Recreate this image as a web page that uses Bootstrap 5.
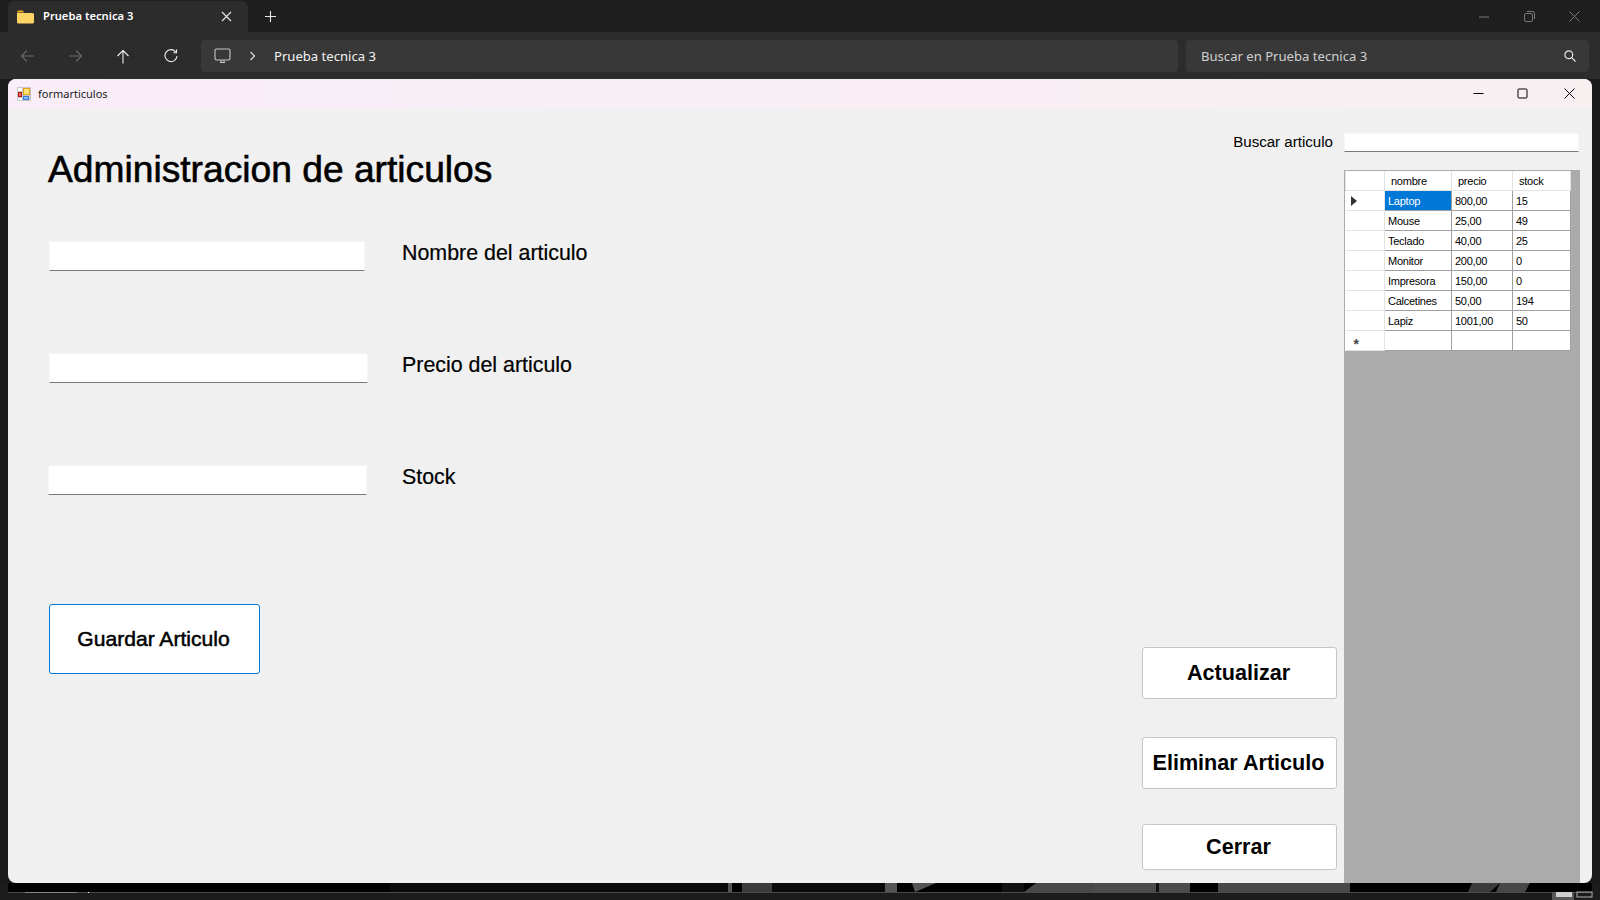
<!DOCTYPE html>
<html lang="es">

<head>
    <meta charset="UTF-8">
    <meta name="viewport" content="width=device-width, initial-scale=1.0">
    <title>Prueba tecnica 3</title>
    <link rel="stylesheet" href="https://cdn.jsdelivr.net/npm/bootstrap@5.3.0/dist/css/bootstrap.min.css">
    <style>
        body {
            width: 1600px;
            height: 900px;
            overflow: hidden;
            background-color: #1c1c1c;
            font-family: "Liberation Sans", Arial, sans-serif;
        }

        /* explorer chrome */
        .tab-strip {
            height: 32px;
            background-color: #1f1f1f;
            padding: 1px 0 0 8px;
            font-family: "Noto Sans", sans-serif;
        }

        .folder-tab {
            width: 240px;
            height: 31px;
            background-color: #2c2c2c;
            border-radius: 6px 6px 0 0;
            padding: 0 16px 0 9px;
            color: #fff;
            font-size: 11.2px;
            font-weight: 600;
        }

        .folder-icon {
            margin-right: 9px;
        }

        .new-tab {
            margin-left: 16px;
        }

        .win-buttons {
            gap: 34px;
            padding-right: 20px;
        }

        .tool-strip {
            height: 47px;
            background-color: #2c2c2c;
            padding: 8px 11px 7px 0;
            font-family: "Noto Sans", sans-serif;
            font-size: 13.1px;
            color: #f2f2f2;
        }

        .tool-text {
            padding-top: 2px;
        }

        .nav-icons {
            width: 201px;
            padding-left: 20px;
            gap: 33px;
        }

        .refresh-icon {
            margin-left: 1px;
        }

        .path-box {
            width: 977px;
            height: 32px;
            background-color: #383838;
            border-radius: 4px;
            padding: 0 13px;
        }

        .path-chevron {
            margin: 0 18px;
        }

        .search-box {
            width: 403px;
            height: 32px;
            margin-left: 8px;
            background-color: #383838;
            border-radius: 4px;
            padding: 0 13px 0 15px;
            color: #cfcfcf;
        }

        /* the form window */
        .desk-area {
            height: 804px;
            padding: 0 8px;
            background-color: #1a1a1a;
        }

        .form-window {
            width: 1584px;
            height: 804px;
            background-color: #f0f0f0;
            border-radius: 8px;
            overflow: hidden;
        }

        .form-title {
            height: 30px;
            padding: 0 17px 0 9px;
            background: linear-gradient(to right, #f8edf8, #f8eff1);
            font-family: "Noto Sans", sans-serif;
            font-size: 11px;
            color: #1a1a1a;
        }

        .form-title-text {
            margin-left: 7px;
        }

        .form-buttons {
            gap: 34px;
            padding-bottom: 2px;
        }

        .form-max {
            margin: 0 2px 0 -1px;
        }

        .form-body {
            height: 774px;
        }

        .left-pane {
            width: 1134px;
            padding-left: 40px;
        }

        .page-heading {
            margin: 40px 0 52px;
            font-size: 37.2px;
            line-height: 40px;
            font-weight: 400;
            font-family: inherit;
            color: #000;
            -webkit-text-stroke: 0.6px #000;
        }

        .field-row {
            height: 30px;
            margin-bottom: 82px;
        }

        .input-slot {
            width: 354px;
        }

        .win-input {
            height: 30px;
            padding: 0 4px;
            border: 1px solid #f6f6f6;
            border-bottom: 1px solid #7a7a7a;
            border-radius: 0;
            background-color: #fff;
        }

        .win-input-name {
            width: 316px;
            margin-left: 1px;
        }

        .win-input-price {
            width: 319px;
            margin-left: 1px;
        }

        .win-input-stock {
            width: 319px;
        }

        .field-label {
            font-size: 21.4px;
            line-height: 24px;
            color: #000;
            -webkit-text-stroke: 0.2px #000;
        }

        .win-btn {
            background-color: #fff;
            color: #000;
            font-family: inherit;
            font-size: 21.6px;
            font-weight: 700;
            border: 1px solid #c6c6c6;
            border-radius: 3px;
            padding: 0 2px 0 0;
        }

        .btn-save {
            width: 211px;
            height: 70px;
            margin: 27px 0 0 1px;
            padding: 0 2px 1px 0;
            border: 1.5px solid #0078d7;
            font-size: 21.1px;
            font-weight: 400;
            -webkit-text-stroke: 0.5px #000;
        }

        .mid-pane {
            width: 195px;
        }

        .search-label {
            margin-top: 23px;
            padding-right: 4px;
            font-size: 15.1px;
            line-height: 20px;
            color: #000;
        }

        .mid-buttons {
            padding-bottom: 13px;
        }

        .btn-update {
            height: 52px;
            margin-bottom: 38px;
        }

        .btn-delete {
            height: 52px;
            margin-bottom: 35px;
        }

        .btn-close-form {
            height: 46px;
        }

        .right-pane {
            margin-left: 7px;
            width: 248px;
        }

        .search-input {
            width: 235px;
            height: 19px;
            margin: 24px 0 18px 0;
        }

        .data-grid {
            width: 236px;
            height: 713px;
            background-color: #ababab;
            padding: 1px 0 0 1px;
        }

        .grid-table {
            width: 225px;
            table-layout: fixed;
            border-collapse: collapse;
            background-color: #fff;
            font-size: 11px;
            letter-spacing: -0.25px;
            color: #000;
        }

        .grid-table td,
        .grid-table th {
            height: 20px;
            padding: 1px 0 0 3px;
            font-weight: 400;
            border: 1px solid #a0a0a0;
            line-height: 12px;
            white-space: nowrap;
        }

        .grid-table thead th {
            height: 19px;
            padding-left: 6px;
            border-color: #e3e3e3;
            border-top: 0;
        }

        .grid-table .row-head {
            padding: 0 0 0 6px;
            border-color: #e3e3e3;
            border-left: 0;
        }

        .grid-table .cell-on {
            background-color: #0078d7;
            color: #fff;
        }

        .row-arrow {
            display: block;
            width: 0;
            height: 0;
            margin: 1px 0 0 -1px;
            border-top: 5px solid transparent;
            border-bottom: 5px solid transparent;
            border-left: 6px solid #333;
        }

        .row-star {
            display: block;
            margin: 7px 0 0 2px;
            font-size: 14px;
            font-weight: 700;
            color: #444;
        }

        .desk-strip {
            display: block;
        }
    </style>
</head>

<body>

    <!-- Explorer tab strip -->
    <div class="tab-strip d-flex align-items-center">
        <div class="folder-tab d-flex align-items-center">
            <svg class="folder-icon" width="17" height="14" viewBox="0 0 17 14">
                <path d="M0 2a1.5 1.5 0 0 1 1.5-1.5h4L7.5 2.500H0z" fill="#f0a91e" />
                <path d="M0 3h15.500A1.500 1.500 0 0 1 17 4.500V12a1.500 1.500 0 0 1-1.500 1.500h-14A1.500 1.500 0 0 1 0 12z" fill="#fdd466" />
            </svg>
            <span class="flex-grow-1">Prueba tecnica 3</span>
            <svg width="11" height="11" viewBox="0 0 11 11">
                <path d="M1 1l9 9M10 1l-9 9" stroke="#e8e8e8" stroke-width="1.1" />
            </svg>
        </div>
        <svg class="new-tab flex-grow-0" width="13" height="13" viewBox="0 0 13 13">
            <path d="M6.500 1v11M1 6.500h11" stroke="#e8e8e8" stroke-width="1.100" />
        </svg>
        <div class="win-buttons d-flex align-items-center ms-auto">
            <svg width="12" height="10" viewBox="0 0 12 10">
                <path d="M1 5h10" stroke="#777" />
            </svg>
            <svg width="11" height="11" viewBox="0 0 11 11" fill="none" stroke="#777">
                <rect x="0.500" y="2.500" width="8" height="8" rx="1.500" />
                <path d="M3 .5h5.500a2 2 0 0 1 2 2V8" />
            </svg>
            <svg width="11" height="11" viewBox="0 0 11 11">
                <path d="M.5.5l10 10M10.500.5l-10 10" stroke="#777" />
            </svg>
        </div>
    </div>

    <!-- Explorer toolbar -->
    <div class="tool-strip d-flex align-items-center">
        <div class="nav-icons d-flex align-items-center">
            <svg width="15" height="14" viewBox="0 0 15 14" fill="none" stroke="#6a6a6a" stroke-width="1.100">
                <path d="M14 7H1.500M7 1.500L1.500 7 7 12.500" />
            </svg>
            <svg width="15" height="14" viewBox="0 0 15 14" fill="none" stroke="#6a6a6a" stroke-width="1.100">
                <path d="M1 7h12.500M8 1.500L13.500 7 8 12.500" />
            </svg>
            <svg width="14" height="15" viewBox="0 0 14 15" fill="none" stroke="#efefef" stroke-width="1.100">
                <path d="M7 14.500V1.500M1.500 7L7 1.500 12.500 7" />
            </svg>
            <svg class="refresh-icon" width="14" height="14" viewBox="0 0 14 14" fill="none" stroke="#efefef" stroke-width="1.100">
                <path d="M11.700 2.900A6 6 0 1 0 13 7" />
                <path d="M12.500.5v3.200H9.300" />
            </svg>
        </div>
        <div class="path-box d-flex align-items-center">
            <svg width="17" height="16" viewBox="0 0 17 16" fill="none" stroke="#c8c8c8" stroke-width="1.100">
                <rect x="1" y="1" width="15" height="11" rx="1.500" />
                <path d="M6 14.500h5M7 12v2.500M10 12v2.500" />
            </svg>
            <svg class="path-chevron" width="7" height="10" viewBox="0 0 7 10" fill="none" stroke="#dcdcdc" stroke-width="1.200">
                <path d="M1.500 1l4 4-4 4" />
            </svg>
            <span class="tool-text">Prueba tecnica 3</span>
        </div>
        <div class="search-box d-flex align-items-center justify-content-between">
            <span class="tool-text">Buscar en Prueba tecnica 3</span>
            <svg width="12" height="12" viewBox="0 0 12 12" fill="none" stroke="#e6e6e6" stroke-width="1.200">
                <circle cx="4.800" cy="4.800" r="3.900" />
                <path d="M7.700 7.700l3.800 3.800" />
            </svg>
        </div>
    </div>

    <!-- Form window -->
    <div class="desk-area">
        <div class="form-window d-flex flex-column">
            <div class="form-title d-flex align-items-center">
                <svg width="14" height="14" viewBox="0 0 14 14">
                    <rect width="14" height="14" fill="#c8c8c8" />
                    <rect x="1" y="1" width="4" height="3" fill="#fff" />
                    <rect x="1" y="11" width="1.500" height="2" fill="#fff" />
                    <rect x="3" y="11" width="2" height="2" fill="#fff" />
                    <rect x="1" y="5" width="4" height="5" fill="#b01818" />
                    <rect x="2" y="6" width="2" height="3" fill="#ef6a5a" />
                    <rect x="6" y="1" width="7" height="7" fill="#e2a51e" />
                    <rect x="7" y="2" width="5" height="5" fill="#ffe27a" />
                    <rect x="6" y="9" width="6" height="4" fill="#3a78d8" />
                    <rect x="7" y="10" width="4" height="2" fill="#8cb8f0" />
                </svg>
                <span class="form-title-text flex-grow-1">formarticulos</span>
                <div class="form-buttons d-flex align-items-center">
                    <svg width="11" height="11" viewBox="0 0 11 11">
                        <path d="M.5 5.500h10" stroke="#000" />
                    </svg>
                    <svg class="form-max" width="11" height="11" viewBox="0 0 11 11" fill="none">
                        <rect x="1" y="1" width="9" height="9" rx="1" stroke="#000" />
                    </svg>
                    <svg width="11" height="11" viewBox="0 0 11 11">
                        <path d="M.5.5l10 10M10.500.5l-10 10" stroke="#000" />
                    </svg>
                </div>
            </div>

            <div class="form-body d-flex">
                <!-- Article form -->
                <div class="left-pane">
                    <h1 class="page-heading">Administracion de articulos</h1>
                    <div class="field-row d-flex">
                        <div class="input-slot"><input class="form-control win-input win-input-name" type="text"></div>
                        <div class="field-label">Nombre del articulo</div>
                    </div>
                    <div class="field-row d-flex">
                        <div class="input-slot"><input class="form-control win-input win-input-price" type="text"></div>
                        <div class="field-label">Precio del articulo</div>
                    </div>
                    <div class="field-row d-flex">
                        <div class="input-slot"><input class="form-control win-input win-input-stock" type="text"></div>
                        <div class="field-label">Stock</div>
                    </div>
                    <button class="btn win-btn btn-save" type="button">Guardar Articulo</button>
                </div>

                <!-- Search label and action buttons -->
                <div class="mid-pane d-flex flex-column">
                    <div class="search-label text-end">Buscar articulo</div>
                    <div class="mid-buttons d-flex flex-column mt-auto">
                        <button class="btn win-btn btn-update" type="button">Actualizar</button>
                        <button class="btn win-btn btn-delete" type="button">Eliminar Articulo</button>
                        <button class="btn win-btn btn-close-form" type="button">Cerrar</button>
                    </div>
                </div>

                <!-- Search box and article grid -->
                <div class="right-pane">
                    <input class="form-control win-input search-input" type="text">
                    <div class="data-grid">
                        <table class="grid-table">
                            <colgroup>
                                <col style="width: 39px">
                                <col style="width: 67px">
                                <col style="width: 61px">
                                <col style="width: 58px">
                            </colgroup>
                            <thead>
                                <tr>
                                    <th></th>
                                    <th>nombre</th>
                                    <th>precio</th>
                                    <th>stock</th>
                                </tr>
                            </thead>
                            <tbody id="gridRows"></tbody>
                        </table>
                    </div>
                </div>
            </div>
        </div>
    </div>

    <!-- Strip of wallpaper under the window -->
    <svg class="desk-strip" width="1600" height="17" viewBox="0 0 1600 17">
        <rect width="1600" height="17" fill="#1c1c1c" />
        <rect x="8" width="1584" height="9" fill="#000" />
        <rect x="390" width="338" height="9" fill="#0b0b0b" />
        <rect x="728" width="4" height="9" fill="#555" />
        <rect x="742" width="30" height="9" fill="#3c3c3c" />
        <rect x="772" width="113" height="9" fill="#0a0a0a" />
        <rect x="885" width="12" height="9" fill="#555" />
        <polygon points="912,0 936,0 915,9" fill="#555" />
        <rect x="1002" width="22" height="9" fill="#111" />
        <polygon points="1036,0 1094,0 1094,9 1024,9" fill="#484848" />
        <rect x="1094" width="62" height="9" fill="#4c4c4c" />
        <rect x="1156" width="3" height="9" fill="#111" />
        <rect x="1159" width="31" height="9" fill="#4c4c4c" />
        <rect x="1218" width="132" height="9" fill="#484848" />
        <polygon points="1472,0 1500,0 1490,9 1468,9" fill="#3c3c3c" />
        <polygon points="1500,0 1530,0 1525,9 1496,9" fill="#484848" />
        <rect x="8" y="9" width="1584" height="1" fill="#4a4a4a" />
        <rect x="25" y="9" width="52" height="1" fill="#7c868e" />
        <rect x="88" y="9" width="1" height="1" fill="#fff" />
        <rect x="1552" y="9" width="22" height="8" fill="#585858" />
        <rect x="1556" y="9" width="16" height="5" fill="#d0d0d0" />
        <rect x="1577" y="9" width="15" height="5" fill="none" stroke="#b0b0b0" />
    </svg>

    <script>
        const articulos = [
            ["Laptop", "800,00", "15"],
            ["Mouse", "25,00", "49"],
            ["Teclado", "40,00", "25"],
            ["Monitor", "200,00", "0"],
            ["Impresora", "150,00", "0"],
            ["Calcetines", "50,00", "194"],
            ["Lapiz", "1001,00", "50"]
        ];

        let rows = "";
        articulos.forEach((a, i) => {
            rows += `<tr>
                <td class="row-head">${i === 0 ? '<span class="row-arrow"></span>' : ""}</td>
                <td class="${i === 0 ? "cell-on" : ""}">${a[0]}</td>
                <td>${a[1]}</td>
                <td>${a[2]}</td>
            </tr>`;
        });
        rows += `<tr><td class="row-head"><span class="row-star">*</span></td><td></td><td></td><td></td></tr>`;
        document.getElementById("gridRows").innerHTML = rows;
    </script>
    <script src="https://cdn.jsdelivr.net/npm/bootstrap@5.3.0/dist/js/bootstrap.bundle.min.js"></script>

</body>

</html>
